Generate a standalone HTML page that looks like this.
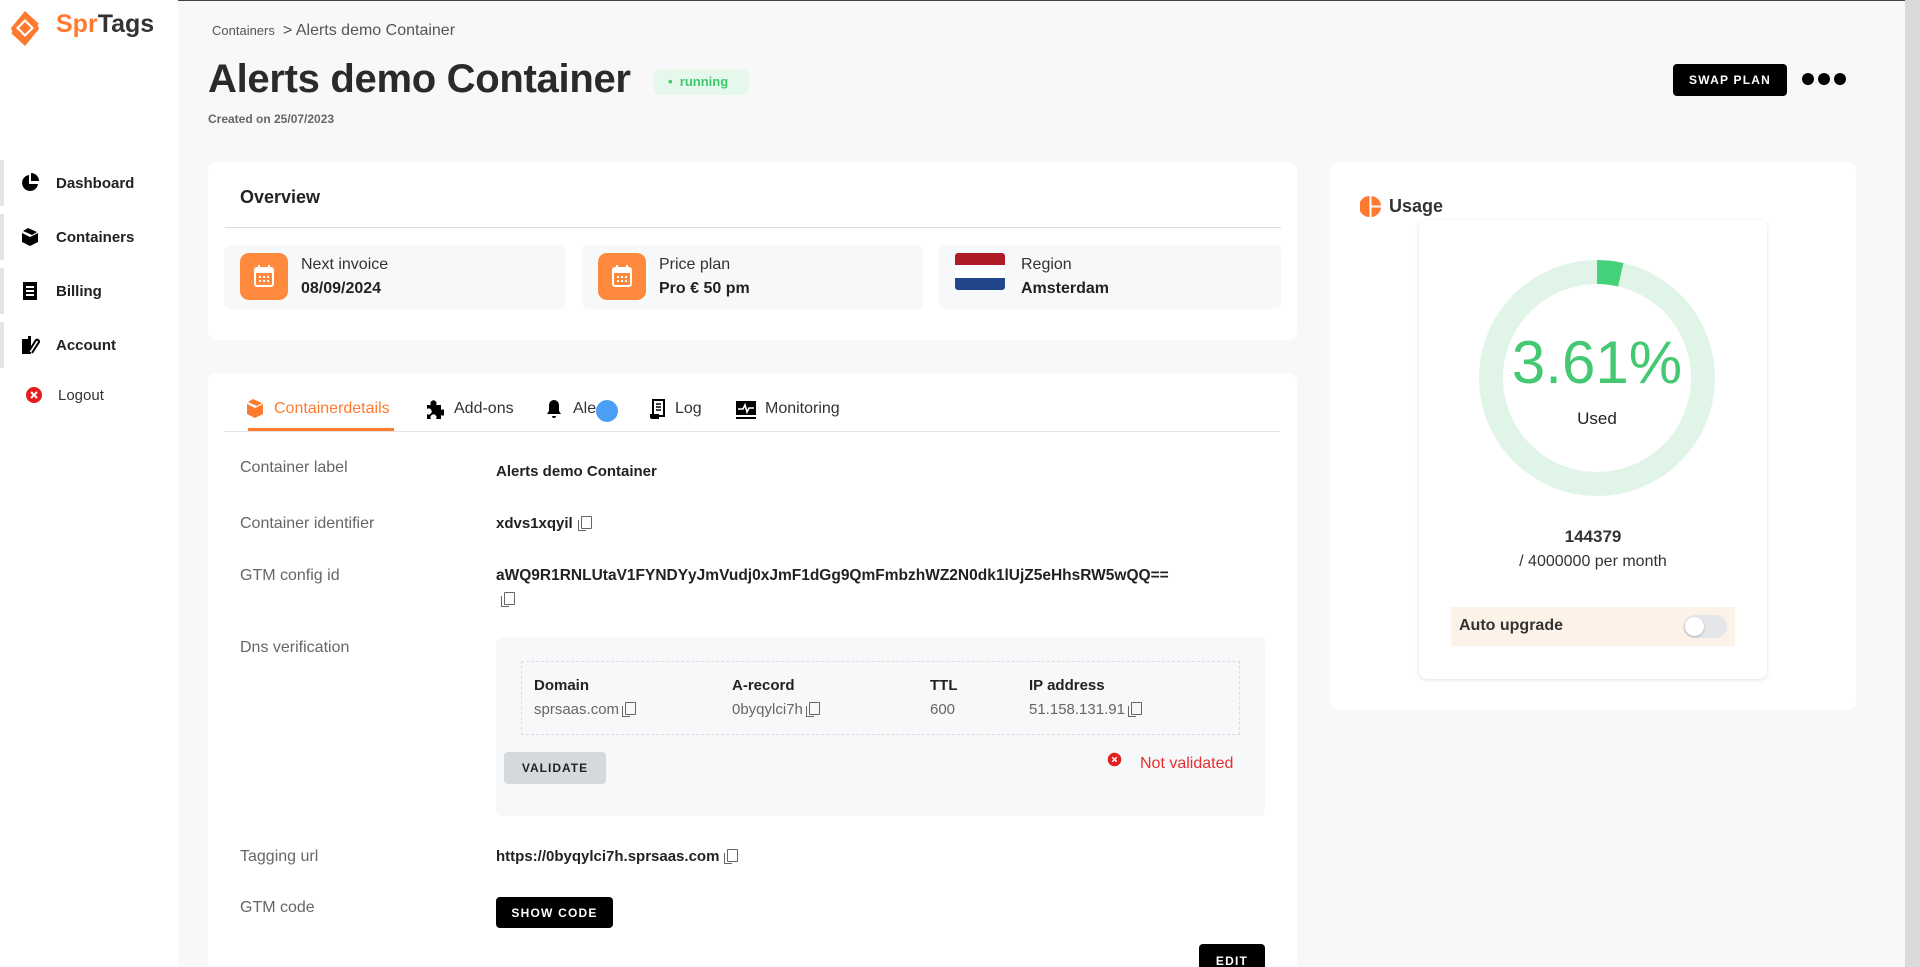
<!DOCTYPE html>
<html style="width:1920px;height:967px;overflow:hidden;background:#f8f8f8"><head><meta charset="utf-8"><style>
*{box-sizing:border-box;margin:0;padding:0}
body{width:1920px;height:967px;overflow:hidden;background:#f8f8f8;font-family:"Liberation Sans",sans-serif;color:#222;position:relative}
.a{position:absolute}
.side{left:0;top:0;width:178px;height:967px;background:#fff}
.nav{left:0;width:178px;height:46px;display:flex;align-items:center}
.nav .bar{position:absolute;left:0;top:0;width:4px;height:100%;background:#e4e5e8}
.nav svg{position:absolute;left:20px}
.nav span{position:absolute;left:56px;font-size:15px;font-weight:bold;color:#222}
.card{background:#fff;border-radius:8px}
.lbl{font-size:16px;color:#666}
.val{font-size:15px;font-weight:bold;color:#222}
.cp{display:inline-block;width:11px;height:13px;border:1.5px solid #666;border-radius:1px;margin-left:6px;vertical-align:-1px;position:relative}
.cp:after{content:"";position:absolute;left:-4px;top:3px;width:7px;height:10px;border-left:1.5px solid #666;border-bottom:1.5px solid #666}
.tab{top:400px;font-size:16px;color:#333}
.btn{background:#000;color:#fff;border-radius:4px;font-size:12px;font-weight:bold;letter-spacing:1.2px;display:flex;align-items:center;justify-content:center}
</style></head><body>
<div class="a" style="left:0;top:0;width:1920px;height:1px;background:#444"></div>
<div class="a side"></div>
<svg class="a" style="left:9px;top:10px" width="32" height="37" viewBox="0 0 32 37"><path d="M16 1 L30 14 L22 18 L16 12 L8 19 L16 26 L4 24 L2 18 Z" fill="#ff7a2f"/><path d="M16 36 L2 23 L10 19 L16 25 L24 18 L16 11 L28 13 L30 19 Z" fill="#ff7a2f"/><path d="M7 18 L16 9 L25 18 L16 27 Z" fill="#fff"/><path d="M10 18 L16 12 L22 18 L16 24 Z" fill="#ff7a2f"/></svg>
<div class="a" style="left:56px;top:10px;font-size:25px;font-weight:bold;color:#ff7a2f">Spr<span style="color:#333">Tags</span></div>

<div class="a nav" style="top:160px"><div class="bar"></div><svg width="20" height="20" viewBox="0 0 20 20"><path d="M9 2a8 8 0 1 0 9 9H9z" fill="#000"/><path d="M11 0a8 8 0 0 1 8 8h-8z" fill="#000"/></svg><span>Dashboard</span></div>
<div class="a nav" style="top:214px"><div class="bar"></div><svg width="20" height="20" viewBox="0 0 20 20"><path d="M2 6l8 4v9l-8-4zM18 6l-8 4v9l8-4zM3 4l5-3 9 4-5 3z" fill="#000"/></svg><span>Containers</span></div>
<div class="a nav" style="top:268px"><div class="bar"></div><svg width="20" height="20" viewBox="0 0 20 20"><rect x="3" y="1" width="14" height="18" fill="#000"/><rect x="6" y="5" width="8" height="2" fill="#fff"/><rect x="6" y="9" width="8" height="2" fill="#fff"/><rect x="6" y="13" width="8" height="2" fill="#fff"/></svg><span>Billing</span></div>
<div class="a nav" style="top:322px"><div class="bar"></div><svg width="20" height="20" viewBox="0 0 20 20"><path d="M2 4h6v-3h3v3h0v15H2z" fill="#000"/><path d="M9 16l7-11a2 2 0 0 1 3 2l-7 11" stroke="#000" stroke-width="2" fill="#fff"/></svg><span>Account</span></div>
<div class="a nav" style="top:372px"><svg width="20" height="20" viewBox="0 0 20 20" style="left:24px"><circle cx="10" cy="10" r="8" fill="#e41e1e"/><path d="M7 7l6 6M13 7l-6 6" stroke="#fff" stroke-width="2"/></svg><span style="left:58px;font-weight:normal;color:#333">Logout</span></div>

<div class="a" style="left:212px;top:22px;font-size:13px;color:#555">Containers <span style="font-size:16px;color:#555">&nbsp;&gt; Alerts demo Container</span></div>
<div class="a" style="left:208px;top:57px;font-size:40px;font-weight:bold;color:#2a2a2a;letter-spacing:-0.3px">Alerts demo Container</div>
<div class="a" style="left:654px;top:69px;width:95px;height:26px;background:#e6f8ec;border-radius:6px;color:#3cc96e;font-size:13px;font-weight:bold;line-height:26px;padding-left:14px">•&nbsp;&nbsp;running</div>
<div class="a" style="left:208px;top:112px;font-size:12px;font-weight:bold;color:#666">Created on 25/07/2023</div>
<div class="a btn" style="left:1673px;top:64px;width:114px;height:32px">SWAP PLAN</div>
<div class="a" style="left:1802px;top:73px;display:flex;gap:4px"><i style="width:12px;height:12px;border-radius:50%;background:#000"></i><i style="width:12px;height:12px;border-radius:50%;background:#000"></i><i style="width:12px;height:12px;border-radius:50%;background:#000"></i></div>
<div class="a" style="left:1905px;top:0;width:15px;height:967px;background:#dadada"></div>

<div class="a card" style="left:208px;top:162px;width:1089px;height:178px"></div>
<div class="a" style="left:240px;top:187px;font-size:18px;font-weight:bold">Overview</div>
<div class="a" style="left:225px;top:227px;width:1056px;height:1px;background:#ddd"></div>
<div class="a" style="left:224px;top:245px;width:342px;height:64px;background:#f7f8fa;border-radius:6px"></div>
<div class="a" style="left:582px;top:245px;width:341px;height:64px;background:#f7f8fa;border-radius:6px"></div>
<div class="a" style="left:939px;top:245px;width:342px;height:64px;background:#f7f8fa;border-radius:6px"></div>
<div class="a" style="left:240px;top:253px;width:48px;height:47px;background:#ff8a3d;border-radius:9px"></div>
<div class="a" style="left:598px;top:253px;width:48px;height:47px;background:#ff8a3d;border-radius:9px"></div>
<svg class="a" style="left:253px;top:264px" width="22" height="24" viewBox="0 0 22 24"><rect x="2" y="4" width="18" height="18" rx="2" fill="none" stroke="#fff" stroke-width="2"/><rect x="2" y="4" width="18" height="5" fill="#fff"/><path d="M6 1v5M16 1v5" stroke="#fff" stroke-width="2"/><g fill="#fff"><rect x="6" y="12" width="2" height="2"/><rect x="10" y="12" width="2" height="2"/><rect x="14" y="12" width="2" height="2"/><rect x="6" y="16" width="2" height="2"/><rect x="10" y="16" width="2" height="2"/><rect x="14" y="16" width="2" height="2"/></g></svg>
<svg class="a" style="left:611px;top:264px" width="22" height="24" viewBox="0 0 22 24"><rect x="2" y="4" width="18" height="18" rx="2" fill="none" stroke="#fff" stroke-width="2"/><rect x="2" y="4" width="18" height="5" fill="#fff"/><path d="M6 1v5M16 1v5" stroke="#fff" stroke-width="2"/><g fill="#fff"><rect x="6" y="12" width="2" height="2"/><rect x="10" y="12" width="2" height="2"/><rect x="14" y="12" width="2" height="2"/><rect x="6" y="16" width="2" height="2"/><rect x="10" y="16" width="2" height="2"/><rect x="14" y="16" width="2" height="2"/></g></svg>
<div class="a" style="left:955px;top:253px;width:50px;height:37px;border-radius:3px;overflow:hidden"><div style="height:12px;background:#ae1c28"></div><div style="height:13px;background:#fff"></div><div style="height:12px;background:#21468b"></div></div>
<div class="a" style="left:301px;top:256px;font-size:16px;color:#333">Next invoice</div>
<div class="a" style="left:301px;top:280px;font-size:16px;font-weight:bold">08/09/2024</div>
<div class="a" style="left:659px;top:256px;font-size:16px;color:#333">Price plan</div>
<div class="a" style="left:659px;top:280px;font-size:16px;font-weight:bold">Pro € 50 pm</div>
<div class="a" style="left:1021px;top:256px;font-size:16px;color:#333">Region</div>
<div class="a" style="left:1021px;top:280px;font-size:16px;font-weight:bold">Amsterdam</div>

<div class="a card" style="left:1330px;top:162px;width:526px;height:548px"></div>
<svg class="a" style="left:1360px;top:196px" width="21" height="21" viewBox="0 0 20 20"><path d="M9 0a10 10 0 0 0 0 20z" fill="#ff7a2f"/><path d="M11 0a10 10 0 0 1 9 9h-9zM11 11h9a10 10 0 0 1-9 9z" fill="#ff7a2f"/></svg>
<div class="a" style="left:1389px;top:196px;font-size:18px;font-weight:bold;color:#333">Usage</div>
<div class="a" style="left:1419px;top:220px;width:348px;height:459px;background:#fff;border-radius:8px;box-shadow:0 1px 4px rgba(0,0,0,.12)"></div>
<svg class="a" style="left:1479px;top:260px" width="236" height="236" viewBox="0 0 236 236"><circle cx="118" cy="118" r="106" fill="none" stroke="#e0f5e7" stroke-width="24"/><circle cx="118" cy="118" r="106" fill="none" stroke="#45d07a" stroke-width="24" stroke-dasharray="24 700" transform="rotate(-90 118 118)"/></svg>
<div class="a" style="left:1479px;top:328px;width:236px;text-align:center;font-size:60px;color:#45c872">3.61%</div>
<div class="a" style="left:1479px;top:409px;width:236px;text-align:center;font-size:17px;color:#222">Used</div>
<div class="a" style="left:1419px;top:527px;width:348px;text-align:center;font-size:17px;font-weight:bold;color:#333">144379</div>
<div class="a" style="left:1419px;top:553px;width:348px;text-align:center;font-size:16px;color:#333">/ 4000000 per month</div>
<div class="a" style="left:1451px;top:607px;width:284px;height:39px;background:#fdf2e8"></div>
<div class="a" style="left:1459px;top:617px;font-size:16px;font-weight:bold;color:#333">Auto upgrade</div>
<div class="a" style="left:1683px;top:615px;width:44px;height:23px;background:#e4e6ea;border-radius:12px"><div style="position:absolute;left:2px;top:2px;width:19px;height:19px;border-radius:50%;background:#fff;box-shadow:0 1px 2px rgba(0,0,0,.25)"></div></div>

<div class="a card" style="left:208px;top:373px;width:1089px;height:600px"></div>
<svg class="a" style="left:246px;top:399px" width="18" height="20" viewBox="0 0 18 20"><path d="M1 5l8 4v10l-8-4zM17 5l-8 4v10l8-4zM2 3l5-3 9 4-5 3z" fill="#ff7a2f"/></svg>
<div class="a tab" style="left:274px;color:#ff7a2f">Containerdetails</div>
<div class="a" style="left:248px;top:428px;width:146px;height:3px;background:#ff7a2f"></div>
<div class="a" style="left:224px;top:431px;width:1056px;height:1px;background:#e2e2e2"></div>
<svg class="a" style="left:424px;top:400px" width="20" height="20" viewBox="0 0 20 20"><path d="M3 5h4a3 3 0 1 1 5 0h5v5a3 3 0 1 1 0 5v4H12a3 3 0 1 0-5 0H3v-5a3 3 0 1 0 0-5z" fill="#000"/></svg>
<div class="a tab" style="left:454px">Add-ons</div>
<svg class="a" style="left:545px;top:399px" width="18" height="20" viewBox="0 0 18 20"><path d="M9 1a5 5 0 0 1 5 5v6l2 3H2l2-3V6a5 5 0 0 1 5-5zM7 17h4a2 2 0 0 1-4 0z" fill="#000"/></svg>
<div class="a tab" style="left:573px">Ale</div>
<div class="a" style="left:596px;top:400px;width:22px;height:22px;border-radius:50%;background:#4a9ff5"></div>
<svg class="a" style="left:649px;top:399px" width="17" height="21" viewBox="0 0 17 21"><path d="M4 1h11v16H4z" fill="none" stroke="#000" stroke-width="2"/><path d="M7 5h5M7 8h5M7 11h5" stroke="#000" stroke-width="1.5"/><path d="M1 15h9v5H3a2 2 0 0 1-2-2z" fill="#000"/></svg>
<div class="a tab" style="left:675px">Log</div>
<svg class="a" style="left:735px;top:400px" width="22" height="19" viewBox="0 0 22 19"><rect x="1" y="1" width="20" height="14" fill="#000"/><path d="M3 9h5l2-4 2 7 2-4h5" stroke="#fff" stroke-width="1.6" fill="none"/><rect x="1" y="17" width="20" height="2" fill="#000"/></svg>
<div class="a tab" style="left:765px">Monitoring</div>

<div class="a lbl" style="left:240px;top:459px">Container label</div>
<div class="a val" style="left:496px;top:463px">Alerts demo Container</div>
<div class="a lbl" style="left:240px;top:515px">Container identifier</div>
<div class="a val" style="left:496px;top:515px">xdvs1xqyil<span class="cp" style="margin-left:8px"></span></div>
<div class="a lbl" style="left:240px;top:567px">GTM config id</div>
<div class="a val" style="left:496px;top:567px;font-size:15.5px">aWQ9R1RNLUtaV1FYNDYyJmVudj0xJmF1dGg9QmFmbzhWZ2N0dk1lUjZ5eHhsRW5wQQ==</div>
<span class="a cp" style="left:504px;top:591px;margin:0"></span>
<div class="a lbl" style="left:240px;top:639px">Dns verification</div>
<div class="a" style="left:496px;top:637px;width:769px;height:179px;background:#f7f8fa;border-radius:6px"></div>
<div class="a" style="left:521px;top:661px;width:719px;height:74px;border:1.5px dashed #dcdde0"></div>
<div class="a val" style="left:534px;top:677px">Domain</div>
<div class="a val" style="left:732px;top:677px">A-record</div>
<div class="a val" style="left:930px;top:677px">TTL</div>
<div class="a val" style="left:1029px;top:677px">IP address</div>
<div class="a lbl" style="left:534px;top:701px;font-size:15px">sprsaas.com<span class="cp"></span></div>
<div class="a lbl" style="left:732px;top:701px;font-size:15px">0byqylci7h<span class="cp"></span></div>
<div class="a lbl" style="left:930px;top:701px;font-size:15px">600</div>
<div class="a lbl" style="left:1029px;top:701px;font-size:15px">51.158.131.91<span class="cp"></span></div>
<div class="a" style="left:504px;top:752px;width:102px;height:32px;background:#d5d8dd;border-radius:4px;font-size:12px;font-weight:bold;letter-spacing:1px;display:flex;align-items:center;justify-content:center;color:#222">VALIDATE</div>
<svg class="a" style="left:1107px;top:752px" width="15" height="15" viewBox="0 0 20 20"><circle cx="10" cy="10" r="9" fill="#e41e1e"/><path d="M7 7l6 6M13 7l-6 6" stroke="#fff" stroke-width="2"/></svg>
<div class="a" style="left:1140px;top:755px;font-size:16px;color:#e53030">Not validated</div>
<div class="a lbl" style="left:240px;top:848px">Tagging url</div>
<div class="a val" style="left:496px;top:848px">https://0byqylci7h.sprsaas.com<span class="cp" style="margin-left:8px"></span></div>
<div class="a lbl" style="left:240px;top:899px">GTM code</div>
<div class="a btn" style="left:496px;top:897px;width:117px;height:31px">SHOW CODE</div>
<div class="a btn" style="left:1199px;top:944px;width:66px;height:23px;border-radius:4px 4px 0 0;align-items:flex-start;padding-top:10px">EDIT</div>
</body></html>
